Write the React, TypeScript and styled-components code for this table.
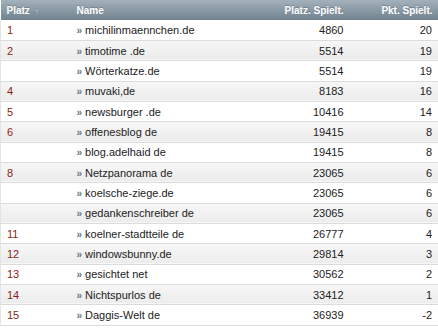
import React from "react";
import styled, { createGlobalStyle } from "styled-components";

interface Entry {
  rank: number | null;
  name: string;
  games: number;
  points: number;
}

const entries: Entry[] = [
  { rank: 1, name: "michilinmaennchen.de", games: 4860, points: 20 },
  { rank: 2, name: "timotime .de", games: 5514, points: 19 },
  { rank: null, name: "Wörterkatze.de", games: 5514, points: 19 },
  { rank: 4, name: "muvaki,de", games: 8183, points: 16 },
  { rank: 5, name: "newsburger .de", games: 10416, points: 14 },
  { rank: 6, name: "offenesblog de", games: 19415, points: 8 },
  { rank: null, name: "blog.adelhaid de", games: 19415, points: 8 },
  { rank: 8, name: "Netzpanorama de", games: 23065, points: 6 },
  { rank: null, name: "koelsche-ziege.de", games: 23065, points: 6 },
  { rank: null, name: "gedankenschreiber de", games: 23065, points: 6 },
  { rank: 11, name: "koelner-stadtteile de", games: 26777, points: 4 },
  { rank: 12, name: "windowsbunny.de", games: 29814, points: 3 },
  { rank: 13, name: "gesichtet net", games: 30562, points: 2 },
  { rank: 14, name: "Nichtspurlos de", games: 33412, points: 1 },
  { rank: 15, name: "Daggis-Welt de", games: 36939, points: -2 },
];

const GlobalStyle = createGlobalStyle`
  body {
    margin: 0;
    background: #fff;
    font-family: "Liberation Sans", Arial, sans-serif;
  }
  *, *::before, *::after {
    box-sizing: border-box;
  }
`;

const Table = styled.table`
  width: 438px;
  border-collapse: collapse;
  table-layout: fixed;
  font-size: 11px;
  color: #222;
`;

const HeadRow = styled.tr`
  height: 20px;
  background: linear-gradient(#a3b1bb, #71838f);
`;

const HeadCell = styled.th<{ $align?: "left" | "right"; $width: number }>`
  width: ${(p) => p.$width}px;
  padding: 0 6px;
  text-align: ${(p) => p.$align ?? "left"};
  color: #fff;
  font-size: 10px;
  font-weight: bold;
  text-shadow: 0 -1px 0 rgba(60, 75, 85, 0.35);
  white-space: nowrap;
`;

const SortMark = styled.span`
  margin-left: 5px;
  color: #c9d2d8;
  font-size: 8px;
`;

const Row = styled.tr<{ $shaded: boolean }>`
  height: 20.35px;
  border-bottom: 1px solid #dcdcdc;
  background: ${(p) =>
    p.$shaded ? "linear-gradient(#f7f7f7, #ececec)" : "#fff"};
`;

const Cell = styled.td<{ $align?: "left" | "right" }>`
  padding: 0 6px;
  text-align: ${(p) => p.$align ?? "left"};
  white-space: nowrap;
  vertical-align: middle;
`;

const RankCell = styled(Cell)`
  color: #8a1f14;
  border-left: 1px solid #e4e4e4;
`;

const NumCell = styled(Cell)`
  color: #222;
`;

const LastCell = styled(NumCell)`
  border-right: 1px solid #e4e4e4;
`;

const Bullet = styled.span`
  display: inline-block;
  margin-right: 3px;
  color: #5d7a90;
  font-weight: bold;
  font-size: 10px;
`;

export default function App() {
  return (
    <>
      <GlobalStyle />
      <Table>
        <thead>
          <HeadRow>
            <HeadCell $width={70}>
              Platz<SortMark>↑</SortMark>
            </HeadCell>
            <HeadCell $width={180}>Name</HeadCell>
            <HeadCell $width={99} $align="right">
              Platz. Spielt.
            </HeadCell>
            <HeadCell $width={89} $align="right">
              Pkt. Spielt.
            </HeadCell>
          </HeadRow>
        </thead>
        <tbody>
          {entries.map((e, i) => (
            <Row key={i} $shaded={i % 2 === 1}>
              <RankCell>{e.rank ?? ""}</RankCell>
              <Cell>
                <Bullet>»</Bullet>
                {e.name}
              </Cell>
              <NumCell $align="right">{e.games}</NumCell>
              <LastCell $align="right">{e.points}</LastCell>
            </Row>
          ))}
        </tbody>
      </Table>
    </>
  );
}
